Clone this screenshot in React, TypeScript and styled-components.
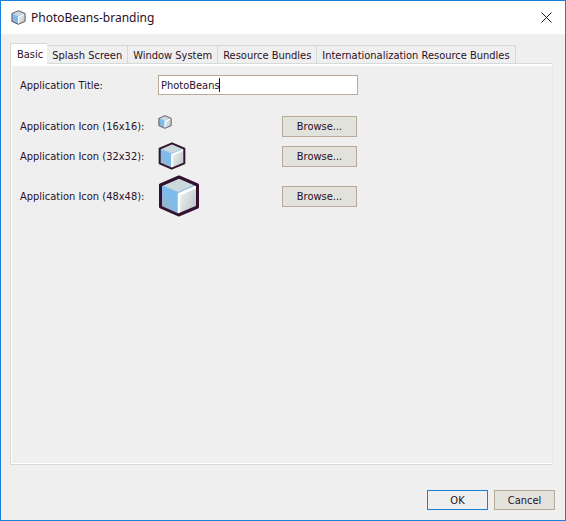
import React, { useId, useState } from "react";
import styled, { createGlobalStyle } from "styled-components";

const Global = createGlobalStyle`
  * { box-sizing: border-box; }
  body { margin: 0; }
  body, button, input { font-family: "DejaVu Sans Condensed", "Noto Sans", sans-serif; font-size: 11px; color: #2a1028; }
`;

const Dialog = styled.div`
  display: flex;
  flex-direction: column;
  min-height: 100vh;
  background: #efefef;
  border: 1px solid #1b7fd6;
`;

const TitleBar = styled.header`
  display: flex;
  align-items: center;
  gap: 5px;
  height: 33px;
  padding: 0 12px 0 10px;
  background: #fff;
`;

const Title = styled.h1`
  flex: 1;
  margin: 0;
  font: 400 12px/18px "Noto Sans", sans-serif;
`;

const CloseButton = styled.button`
  display: flex;
  padding: 0;
  border: 0;
  background: none;
`;

const Main = styled.main`
  flex: 1;
  display: flex;
  flex-direction: column;
  padding: 9px 12px 0 9px;
`;

const TabList = styled.div`
  display: flex;
  align-items: flex-end;
`;

const Tab = styled.button<{ $active: boolean }>`
  position: relative;
  height: ${(p) => (p.$active ? 21 : 18)}px;
  margin-bottom: ${(p) => (p.$active ? -1 : 0)}px;
  padding: ${(p) => (p.$active ? "0 4px 0 6px" : "1px 5px 0")};
  border: 1px solid #d3dbd9;
  border-width: ${(p) => (p.$active ? "1px 0 0 1px" : "1px 1px 0 0")};
  background: ${(p) => (p.$active ? "#fff" : "#efefef")};
  white-space: nowrap;
`;

const Panel = styled.section`
  flex: 1;
  display: flex;
  flex-direction: column;
  gap: 5px;
  padding: 11px 9px 9px;
  border: 1px solid #d3dbd9;
  border-right-color: #e4e8e7;
  box-shadow: inset 0 2px #fff, inset 1px -1px #fff;
`;

const Row = styled.div<{ $height: number; $after?: number }>`
  display: grid;
  grid-template-columns: 138px 124px 76px;
  align-items: center;
  min-height: ${(p) => p.$height}px;
  margin-bottom: ${(p) => p.$after ?? 0}px;
`;

const Label = styled.label`
  white-space: nowrap;
`;

const Field = styled.div`
  position: relative;
  grid-column: 2 / 4;
`;

const TextInput = styled.input`
  display: block;
  width: 200px;
  height: 20px;
  padding: 0 2px;
  border: 1px solid #b7ab98;
  border-radius: 0;
  background: #fff;
  outline: none;
`;

const Caret = styled.span`
  position: absolute;
  left: 61px;
  top: 3px;
  width: 1px;
  height: 14px;
  background: #2a1028;
`;

const IconSlot = styled.div<{ $top: boolean }>`
  display: flex;
  align-self: ${(p) => (p.$top ? "start" : "center")};
`;

const Button = styled.button<{ $primary?: boolean }>`
  padding: 0;
  border: 1px solid ${(p) => (p.$primary ? "#1b7fd6" : "#b9aa97")};
  border-radius: 0;
  background: ${(p) => (p.$primary ? "#efefef" : "#e1e2dc")};
`;

const BrowseButton = styled(Button)`
  width: 75px;
  height: 21px;
`;

const Footer = styled.footer`
  display: flex;
  justify-content: flex-end;
  gap: 6px;
  padding: 25px 10px 10px;
`;

const FooterButton = styled(Button)`
  width: 61px;
  height: 20px;
`;

const Cube = ({ size }: { size: number }) => {
  const id = useId();
  const small = size < 20;
  return (
    <svg width={size} height={size} viewBox="0 0 42 42" aria-hidden="true">
      <defs>
        <linearGradient id={`${id}l`} x1="0.8" y1="0.2" x2="0.2" y2="1">
          <stop offset="0.35" stopColor="#7ebbed" />
          <stop offset="1" stopColor="#a3b3b8" />
        </linearGradient>
        <linearGradient id={`${id}r`} x1="0" y1="0.2" x2="1" y2="0.9">
          <stop offset="0" stopColor="#eef2f3" />
          <stop offset="0.5" stopColor="#d5dadb" />
          <stop offset="1" stopColor="#b5c3cb" />
        </linearGradient>
      </defs>
      <path d="M21 2 L39 10 L20.500 18 L3 10 Z" fill="#cbd8dc" />
      <path d="M3 10 L20.500 18 L20.500 40 L3 32 Z" fill={`url(#${id}l)`} />
      <path d="M20.500 18 L39 10 L39 32 L20.500 40 Z" fill={`url(#${id}r)`} />
      <path d="M4 10.500 L20 17.500 L37 10" fill="none" stroke="#82bcea" strokeWidth="1" />
      <path d="M21 39 L21 19.500 L38 12" fill="none" stroke="#fff" strokeWidth="2.5" />
      <path
        d="M21 2 L39.500 10 L39.500 32 L20.500 40 L2.500 32 L2.500 10 Z"
        fill="none"
        stroke={small ? "#4a4350" : "#32122e"}
        strokeWidth={small ? 2.5 : 3}
        strokeLinejoin="round"
      />
    </svg>
  );
};

const tabs = [
  "Basic",
  "Splash Screen",
  "Window System",
  "Resource Bundles",
  "Internationalization Resource Bundles",
];

const icons = [
  { label: "16x16", size: 14, height: 22 },
  { label: "32x32", size: 28, height: 28 },
  { label: "48x48", size: 42, height: 42 },
];

export default function App() {
  const [active, setActive] = useState(0);
  const [title, setTitle] = useState("PhotoBeans");
  return (
    <>
      <Global />
      <Dialog role="dialog" aria-labelledby="dialog-title">
        <TitleBar>
          <Cube size={15} />
          <Title id="dialog-title">PhotoBeans-branding</Title>
          <CloseButton aria-label="Close">
            <svg width="13" height="13" viewBox="0 0 13 13">
              <path d="M1.500 1.500 L11.500 11.500 M11.500 1.500 L1.500 11.500" stroke="#2a1028" />
            </svg>
          </CloseButton>
        </TitleBar>
        <Main>
          <TabList role="tablist">
            {tabs.map((name, i) => (
              <Tab
                key={name}
                role="tab"
                aria-selected={i === active}
                $active={i === active}
                onClick={() => setActive(i)}
              >
                {name}
              </Tab>
            ))}
          </TabList>
          <Panel role="tabpanel">
            <Row $height={20} $after={15}>
              <Label htmlFor="app-title">Application Title:</Label>
              <Field>
                <TextInput id="app-title" value={title} onChange={(e) => setTitle(e.target.value)} />
                <Caret />
              </Field>
            </Row>
            {icons.map((icon) => (
              <Row key={icon.label} $height={icon.height}>
                <Label htmlFor={`browse-${icon.label}`}>Application Icon ({icon.label}):</Label>
                <IconSlot $top={icon.size === 14}>
                  <Cube size={icon.size} />
                </IconSlot>
                <BrowseButton id={`browse-${icon.label}`}>Browse...</BrowseButton>
              </Row>
            ))}
          </Panel>
        </Main>
        <Footer>
          <FooterButton $primary>OK</FooterButton>
          <FooterButton>Cancel</FooterButton>
        </Footer>
      </Dialog>
    </>
  );
}
